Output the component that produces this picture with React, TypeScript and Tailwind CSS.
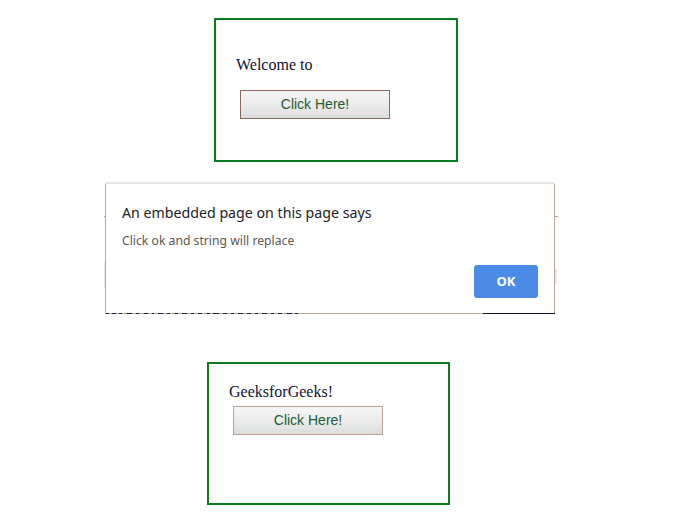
import React from "react";

const serif = { fontFamily: '"Liberation Serif", "Times New Roman", serif' };
const sans = { fontFamily: '"Liberation Sans", Arial, sans-serif' };
const ui = { fontFamily: '"Noto Sans", "Open Sans", sans-serif' };

function ClickButton({ border }: { border: string }) {
  return (
    <button
      className={`w-[150px] h-[29px] border ${border} bg-gradient-to-b from-[#f5f5f5] via-[#ececec] to-[#dadcdc] text-[14px] text-[#1f5a32] flex items-center justify-center`}
      style={sans}
    >
      Click Here!
    </button>
  );
}

function Fragments() {
  const segs = [
    [1, 3], [7, 4], [14, 3], [22, 5], [31, 3], [39, 4], [47, 2], [53, 5], [62, 3], [70, 3],
    [77, 5], [86, 3], [93, 4], [102, 3], [108, 6], [118, 4], [126, 3], [133, 5], [142, 4],
    [150, 3], [157, 5], [166, 3], [173, 4], [182, 5], [190, 3],
  ];
  return (
    <svg width="450" height="1" className="block">
      {segs.map(([x, w], i) => (
        <rect key={i} x={x} y={0} width={w} height={1} fill="#1c1c48" />
      ))}
      <rect x={378} y={0} width={72} height={1} fill="#10104a" />
    </svg>
  );
}

export default function App() {
  return (
    <div className="w-[696px] h-[526px] bg-white flex flex-col overflow-hidden">
      {/* Box 1 */}
      <div className="ml-[214px] mt-[18px] w-[244px] h-[144px] border-2 border-[#0a7d1e] pl-[20px] pt-[36px] flex flex-col items-start">
        <div className="text-[16px] text-[#111133] leading-[18px]" style={serif}>
          Welcome to
        </div>
        <div className="ml-[4px] mt-[16px]">
          <ClickButton border="border-[#8a6a5c]" />
        </div>
      </div>

      {/* Dialog region */}
      <div className="ml-[104px] mt-[20px] flex flex-col">
        <div className="ml-[1px] w-[450px] h-px bg-[#e6e8e8]" />
        <div className="relative flex">
          <div className="w-px flex flex-col">
            <div className="h-[33px]" />
            <div className="h-px bg-[#b5a394]" />
            <div className="h-[45px]" />
            <div className="h-[26px] bg-[#e9ebeb]" />
          </div>
          <div
            className="relative w-[450px] h-[131px] bg-white border border-[#b8a698] border-t-[#e2e2e2] rounded-t-[2px] flex flex-col"
            style={ui}
          >
            <div className="pl-[16px] pt-[18px] text-[14.2px] leading-[21px] text-[#202124]">
              An embedded page on this page says
            </div>
            <div className="pl-[16px] mt-[9px] text-[12.2px] leading-[18px] text-[#5f5650]">
              Click ok and string will replace
            </div>
            <div className="flex-1" />
            <div className="flex justify-end pr-[16px] pb-[15px]">
              <button className="w-[64px] h-[33px] rounded-[3px] bg-[#4a8be8] text-white text-[13px] font-bold">
                OK
              </button>
            </div>
            <div className="absolute left-[-1px] bottom-[-1px]">
              <Fragments />
            </div>
          </div>
          <div className="w-[3px] flex flex-col">
            <div className="h-[33px]" />
            <div className="h-px bg-[#b5a394]" />
            <div className="h-[52px]" />
            <div className="w-[2px] h-[15px] bg-[#e9ebeb]" />
          </div>
        </div>
      </div>

      {/* Box 3 */}
      <div className="ml-[207px] mt-[48px] w-[243px] h-[143px] border-2 border-[#0a7d1e] pl-[20px] pt-[19px] flex flex-col items-start">
        <div className="text-[16px] text-[#111133] leading-[18px]" style={serif}>
          GeeksforGeeks!
        </div>
        <div className="ml-[4px] mt-[5px]">
          <ClickButton border="border-[#bda38e]" />
        </div>
      </div>
    </div>
  );
}
